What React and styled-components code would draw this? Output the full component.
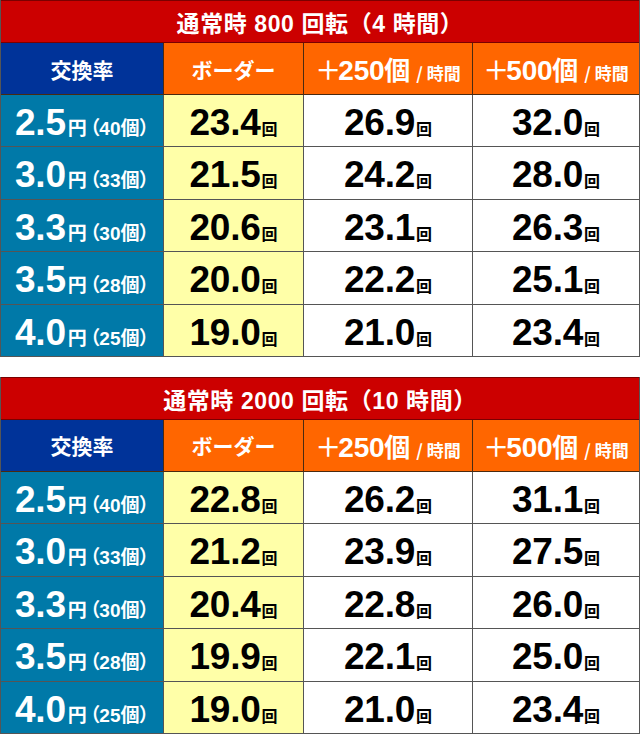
import React from "react";
import styled, { createGlobalStyle } from "styled-components";

const GlobalStyle = createGlobalStyle`
  body {
    margin: 0;
    background: #fff;
    font-family: "Liberation Sans", "Noto Sans CJK JP", sans-serif;
  }
`;

const Page = styled.div`
  display: flex;
  flex-direction: column;
  gap: 20px;
  width: 640px;
`;

const Table = styled.div`
  display: grid;
  grid-template-columns: 163px 140px 169px 1fr;
  grid-template-rows: 43px 52px repeat(5, 52.4px);
  border-left: 1px solid #555;
  border-right: 1px solid #555;
  box-sizing: border-box;
`;

const Title = styled.div`
  grid-column: 1 / -1;
  display: flex;
  align-items: center;
  justify-content: center;
  background: #cc0000;
  color: #fff;
  border-top: 1px solid #7a0000;
  border-bottom: 1px solid #7a0000;
  font-family: "Liberation Sans", "Noto Sans CJK JP", sans-serif;
  font-weight: 700;
  font-size: 23px;
  letter-spacing: 0.6px;
  padding-top: 1px;
`;

const Cell = styled.div`
  display: flex;
  align-items: baseline;
  justify-content: center;
  padding-top: 9px;
  box-sizing: border-box;
  white-space: nowrap;
  border-bottom: 1px solid #555;
  border-right: ${(p) => (p.$last ? "none" : "1px solid #555")};
  background: ${(p) => p.$bg};
  color: ${(p) => p.$color || "#000"};
  font-weight: 700;
`;

const HeadCell = styled(Cell)`
  align-items: center;
  padding-top: 0;
  border-color: #4a2a10;
  font-family: "Noto Sans CJK JP", sans-serif;
  font-size: 21px;
  color: #fff;
`;

const HeadGroup = styled.span`
  display: flex;
  align-items: baseline;
`;

const Cross = styled.span`
  font-family: "Noto Sans CJK JP", sans-serif;
  font-weight: 500;
  font-size: 26px;
  margin-right: -3px;
`;

const Plus = styled.span`
  font-family: "Liberation Sans", sans-serif;
  font-size: 28px;
  letter-spacing: -0.3px;
`;

const Piece = styled.span`
  font-family: "Noto Sans CJK JP", sans-serif;
  font-size: ${(p) => p.$size}px;
  margin-left: ${(p) => p.$gap || 0}px;
`;

const Big = styled.span`
  font-family: "Liberation Sans", sans-serif;
  font-size: 37px;
  letter-spacing: -0.2px;
  line-height: 1;
`;

const Unit = styled.span`
  font-family: "Noto Sans CJK JP", sans-serif;
  font-size: 16px;
  line-height: 1;
  margin-left: 1px;
`;

const RateNote = styled.span`
  font-family: "Liberation Sans", "Noto Sans CJK JP", sans-serif;
  font-size: 19px;
  line-height: 1;
  margin-left: 2px;
  white-space: nowrap;
`;

const Paren = styled.span`
  font-family: "Noto Sans CJK JP", sans-serif;
  font-feature-settings: "palt";
  margin-left: ${(p) => (p.$open ? "3px" : "0")};
`;

const rates = [
  ["2.5", "40"],
  ["3.0", "33"],
  ["3.3", "30"],
  ["3.5", "28"],
  ["4.0", "25"],
];

const tables = [
  {
    title: "通常時 800 回転（4 時間）",
    rows: [
      ["23.4", "26.9", "32.0"],
      ["21.5", "24.2", "28.0"],
      ["20.6", "23.1", "26.3"],
      ["20.0", "22.2", "25.1"],
      ["19.0", "21.0", "23.4"],
    ],
  },
  {
    title: "通常時 2000 回転（10 時間）",
    rows: [
      ["22.8", "26.2", "31.1"],
      ["21.2", "23.9", "27.5"],
      ["20.4", "22.8", "26.0"],
      ["19.9", "22.1", "25.0"],
      ["19.0", "21.0", "23.4"],
    ],
  },
];

const PerHour = ({ amount }) => (
  <HeadGroup>
    <Cross>＋</Cross>
    <Plus>{amount}</Plus>
    <Piece $size={26}>個</Piece>
    <Piece $size={17} $gap={6}>/ 時間</Piece>
  </HeadGroup>
);

const BorderTable = ({ title, rows }) => (
  <Table>
    <Title>{title}</Title>
    <HeadCell $bg="#003399">交換率</HeadCell>
    <HeadCell $bg="#ff6600">ボーダー</HeadCell>
    <HeadCell $bg="#ff6600">
      <PerHour amount="250" />
    </HeadCell>
    <HeadCell $bg="#ff6600" $last>
      <PerHour amount="500" />
    </HeadCell>
    {rows.map((row, i) => (
      <React.Fragment key={i}>
        <Cell $bg="#0079a8" $color="#fff">
          <Big>{rates[i][0]}</Big>
          <RateNote>
            円<Paren $open>（</Paren>
            {rates[i][1]}個<Paren>）</Paren>
          </RateNote>
        </Cell>
        <Cell $bg="#ffffa8">
          <Big>{row[0]}</Big>
          <Unit>回</Unit>
        </Cell>
        <Cell $bg="#fff">
          <Big>{row[1]}</Big>
          <Unit>回</Unit>
        </Cell>
        <Cell $bg="#fff" $last>
          <Big>{row[2]}</Big>
          <Unit>回</Unit>
        </Cell>
      </React.Fragment>
    ))}
  </Table>
);

export default function App() {
  return (
    <>
      <GlobalStyle />
      <Page>
        {tables.map((t) => (
          <BorderTable key={t.title} title={t.title} rows={t.rows} />
        ))}
      </Page>
    </>
  );
}
